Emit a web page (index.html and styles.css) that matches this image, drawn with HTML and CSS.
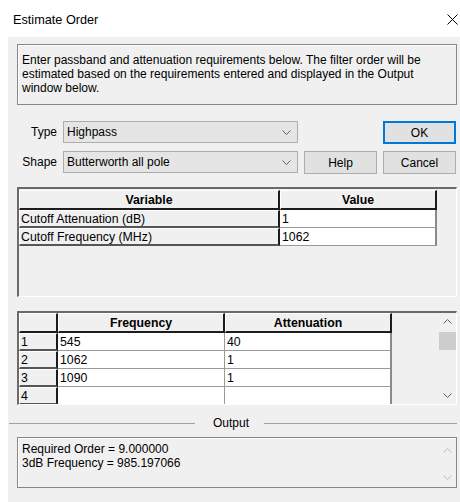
FILE: index.html
```html
<!DOCTYPE html>
<html lang="en">
<head>
<meta charset="utf-8">
<title>Estimate Order</title>
<link rel="stylesheet" href="styles.css">
</head>
<body>
<div class="window">
  <header class="titlebar">
    <span class="title">Estimate Order</span>
    <svg class="close" width="11" height="11" viewBox="0 0 11 11" aria-label="Close">
      <path d="M0.5 0.5 L10.5 10.5 M10.5 0.5 L0.5 10.5" stroke="#000" stroke-width="1" fill="none"/>
    </svg>
  </header>

  <main class="client">
    <p class="desc">Enter passband and attenuation requirements below. The filter order will be<br>estimated based on the requirements entered and displayed in the Output<br>window below.</p>

    <div class="controls">
      <label class="lbl">Type</label>
      <div class="combo">
        <span>Highpass</span>
        <svg class="chev" width="9" height="5" viewBox="0 0 9 5"><path d="M0.5 0.5 L4.5 4.5 L8.5 0.5" stroke="#606060" fill="none"/></svg>
      </div>
      <span class="blank"></span>
      <button class="btn default">OK</button>

      <label class="lbl">Shape</label>
      <div class="combo">
        <span>Butterworth all pole</span>
        <svg class="chev" width="9" height="5" viewBox="0 0 9 5"><path d="M0.5 0.5 L4.5 4.5 L8.5 0.5" stroke="#606060" fill="none"/></svg>
      </div>
      <button class="btn">Help</button>
      <button class="btn">Cancel</button>
    </div>

    <div class="frame frame-vars">
      <table class="grid">
        <colgroup><col class="c-var"><col class="c-val"></colgroup>
        <thead>
          <tr><th>Variable</th><th>Value</th></tr>
        </thead>
        <tbody>
          <tr><td class="fixed">Cutoff Attenuation (dB)</td><td>1</td></tr>
          <tr><td class="fixed">Cutoff Frequency (MHz)</td><td>1062</td></tr>
        </tbody>
      </table>
    </div>

    <div class="frame frame-pts">
      <table class="grid">
        <colgroup><col class="c-idx"><col class="c-num"><col class="c-num"></colgroup>
        <thead>
          <tr><th></th><th>Frequency</th><th>Attenuation</th></tr>
        </thead>
        <tbody>
          <tr><td class="fixed">1</td><td>545</td><td>40</td></tr>
          <tr><td class="fixed">2</td><td>1062</td><td>1</td></tr>
          <tr><td class="fixed">3</td><td>1090</td><td>1</td></tr>
          <tr><td class="fixed">4</td><td></td><td></td></tr>
        </tbody>
      </table>
      <div class="vscroll">
        <div class="arrow"><svg width="9" height="5" viewBox="0 0 9 5"><path d="M0.5 4.5 L4.5 0.5 L8.5 4.5" stroke="#606060" fill="none"/></svg></div>
        <div class="thumb"></div>
        <div class="arrow down"><svg width="9" height="5" viewBox="0 0 9 5"><path d="M0.5 0.5 L4.5 4.5 L8.5 0.5" stroke="#606060" fill="none"/></svg></div>
      </div>
    </div>

    <div class="sep">
      <span class="rule short"></span>
      <span class="sep-label">Output</span>
      <span class="rule"></span>
    </div>

    <div class="output">
      <div class="out-text">Required Order = 9.000000<br>3dB Frequency = 985.197066</div>
      <div class="out-scroll">
        <svg width="9" height="5" viewBox="0 0 9 5"><path d="M0.5 4.5 L4.5 0.5 L8.5 4.5" stroke="#bdbdbd" fill="none"/></svg>
        <svg width="9" height="5" viewBox="0 0 9 5"><path d="M0.5 0.5 L4.5 4.5 L8.5 0.5" stroke="#bdbdbd" fill="none"/></svg>
      </div>
    </div>
  </main>
</div>
</body>
</html>
```

FILE: styles.css
```css
* { box-sizing: border-box; }

html, body { margin: 0; padding: 0; }

body {
  width: 460px;
  height: 502px;
  overflow: hidden;
  background: #fff;
  color: #000;
  font-family: "Liberation Sans", Arial, sans-serif;
  font-size: 12px;
}

/* window caption */
.titlebar {
  height: 37px;
  display: flex;
  align-items: center;
  justify-content: space-between;
  padding: 2px 2px 0 13px;
}
.title { font-size: 12.7px; }
.close { display: block; }

/* dialog body */
.client {
  margin-left: 8px;
  height: 465px;
  background: #f0f0f0;
  padding: 7px 3px 0 9px;
  display: flex;
  flex-direction: column;
}

.desc {
  margin: 0;
  height: 61px;
  border: 1px solid #868686;
  box-shadow: inset 1px 1px 0 #fff;
  padding: 8px 4px 0;
  line-height: 14px;
}

/* type / shape pickers and dialog buttons */
.controls {
  margin-top: 16px;
  display: grid;
  grid-template-columns: 40px 235px 73px 73px;
  grid-template-rows: 23px 23px;
  column-gap: 6px;
  row-gap: 7px;
}
.lbl {
  align-self: center;
  text-align: right;
  padding-bottom: 1px;
}
.combo {
  height: 22px;
  border: 1px solid #adadad;
  background: #e5e5e5;
  display: flex;
  align-items: center;
  justify-content: space-between;
  padding: 0 6px 0 3px;
}
.btn {
  margin: 0;
  height: 23px;
  border: 1px solid #adadad;
  background: #e1e1e1;
  font: inherit;
  color: #000;
  padding: 0;
}
.btn.default {
  border: 2px solid #0078d7;
}

/* data grids */
.frame {
  border-top: 2px solid #6a6a6a;
  border-left: 2px solid #6a6a6a;
  border-right: 1px solid #fff;
  border-bottom: 1px solid #fff;
  background: #f0f0f0;
  overflow: hidden;
}
.frame-vars {
  margin-top: 13px;
  height: 110px;
  padding-top: 1px;
}
.frame-pts {
  margin-top: 14px;
  height: 94px;
  display: flex;
  align-items: flex-start;
}

.grid {
  border-collapse: separate;
  border-spacing: 0;
  table-layout: fixed;
  font-size: 12.3px;
}
.c-var { width: 261px; }
.c-val { width: 157px; }
.c-idx { width: 39px; }
.c-num { width: 167px; }

.grid th {
  height: 20px;
  padding: 0;
  background: #f0f0f0;
  font-weight: bold;
  text-align: center;
  border-top: 1px solid #fff;
  border-left: 1px solid #fff;
  border-right: 2px solid #1c1c1c;
  border-bottom: 2px solid #1c1c1c;
}
.grid td {
  height: 18px;
  padding: 0 0 0 2px;
  background: #fff;
  white-space: nowrap;
  border-right: 1px solid #9a9a9a;
  border-bottom: 1px solid #9a9a9a;
}
.grid td.fixed {
  padding-left: 1px;
  background: #f0f0f0;
  border-top: 1px solid #fff;
  border-left: 1px solid #fff;
  border-right: 2px solid #1c1c1c;
  border-bottom: 2px solid #555;
}
.grid td:last-child { border-right: 2px solid #8a8a8a; }

.vscroll {
  margin-left: auto;
  width: 17px;
  height: 91px;
  display: flex;
  flex-direction: column;
}
.vscroll .arrow {
  height: 17px;
  display: flex;
  align-items: center;
  justify-content: center;
}
.vscroll .arrow svg { display: block; }
.vscroll .thumb {
  height: 18px;
  margin-top: 2px;
  background: #cdcdcd;
}
.vscroll .down { margin-top: auto; }

/* output group */
.sep {
  margin: 10px 0 6px -8px;
  height: 16px;
  display: flex;
  align-items: center;
}
.rule {
  flex: 1;
  height: 1px;
  background: #a0a0a0;
}
.rule.short { flex: 0 0 186px; }
.sep-label { margin: 0 15px 0 18px; }

.output {
  height: 51px;
  border: 1px solid #868686;
  box-shadow: inset 1px 1px 0 #fff;
  display: flex;
  justify-content: space-between;
}
.out-text {
  padding: 4px 4px 0;
  line-height: 14px;
}
.out-scroll {
  width: 17px;
  display: flex;
  flex-direction: column;
  justify-content: space-between;
  align-items: center;
  padding: 10px 0 7px;
}
.out-scroll svg { display: block; }
```
